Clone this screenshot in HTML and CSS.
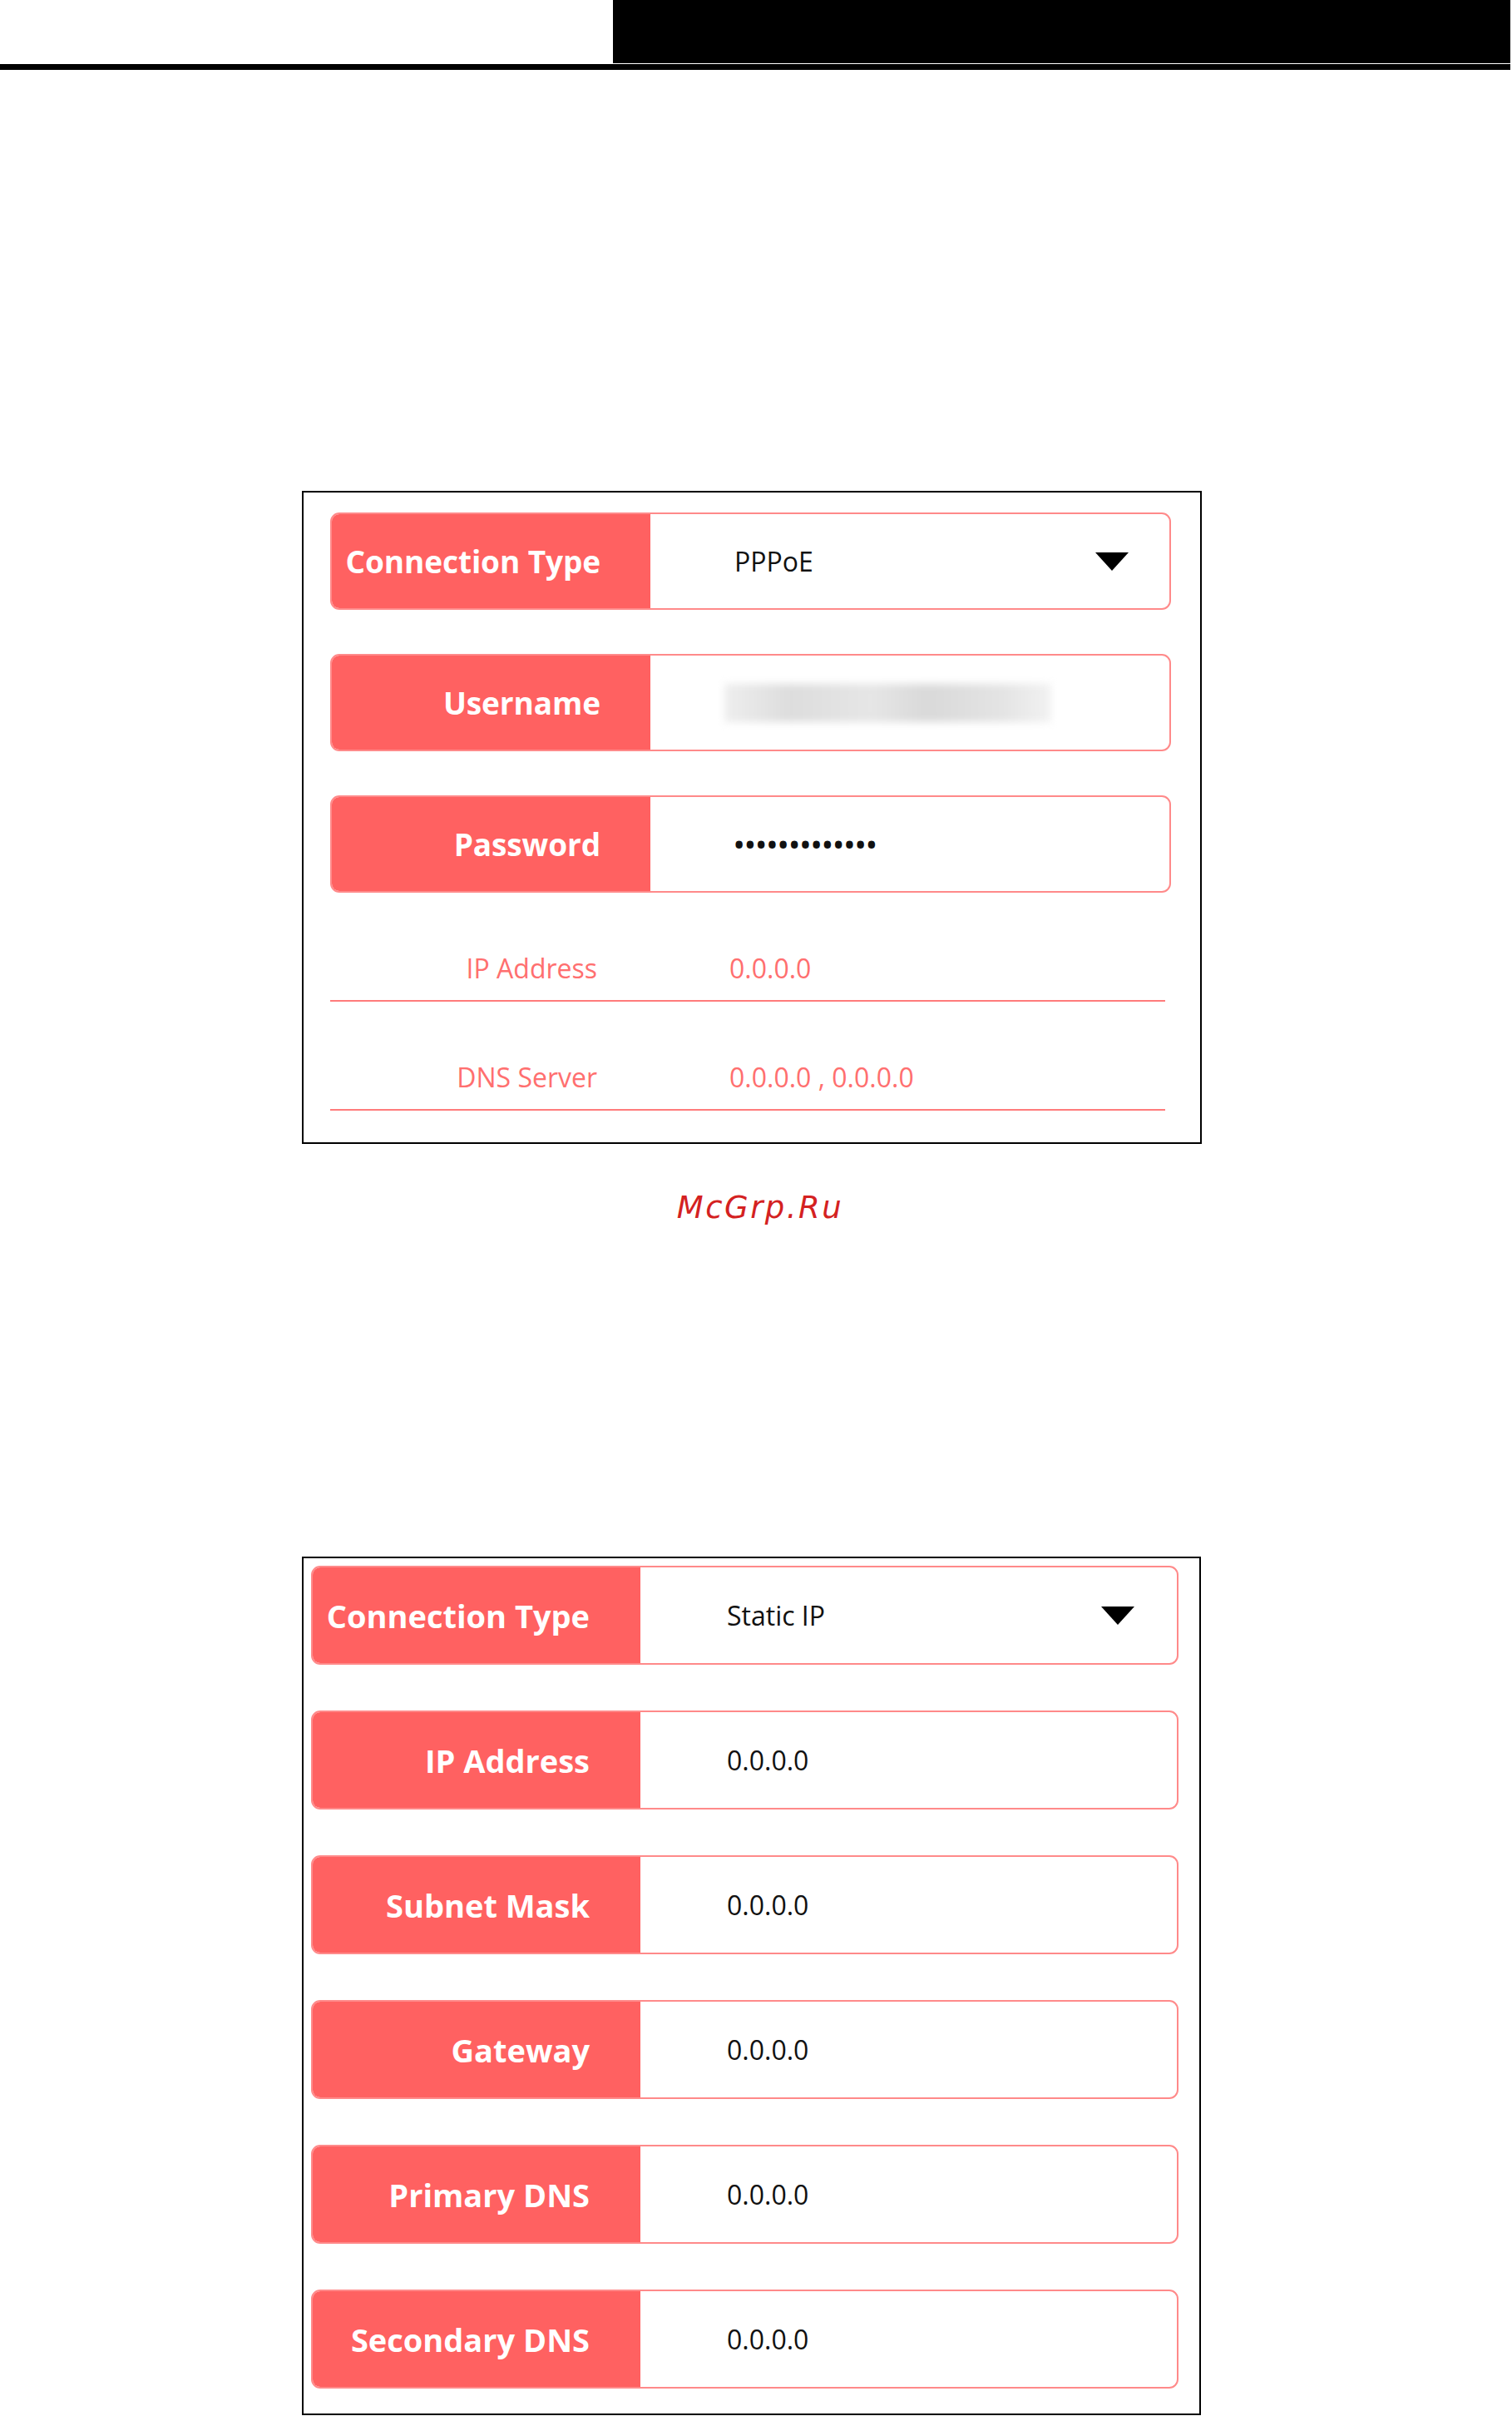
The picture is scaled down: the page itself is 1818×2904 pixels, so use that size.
FILE: index.html
```html
<!DOCTYPE html>
<html lang="en">
<head>
    <meta charset="UTF-8">
    <meta name="viewport" content="width=device-width, initial-scale=1.0">
    <title>Internet Settings</title>
    <link rel="stylesheet" href="styles.css">
</head>
<body>
    <div class="topbar">
        <div class="topbar-blank"></div>
        <div class="topbar-fill"></div>
    </div>
    <div class="topbar-rule"></div>

    <div class="panel panel-pppoe">
        <div class="field">
            <div class="field-label">Connection Type</div>
            <div class="field-value">
                <span>PPPoE</span>
                <svg class="caret" width="40" height="22" viewBox="0 0 40 22"><polygon points="0,0 40,0 20,22"/></svg>
            </div>
        </div>
        <div class="field">
            <div class="field-label">Username</div>
            <div class="field-value">
                <span class="blurred"></span>
            </div>
        </div>
        <div class="field">
            <div class="field-label">Password</div>
            <div class="field-value">
                <span class="dots">&bull;&bull;&bull;&bull;&bull;&bull;&bull;&bull;&bull;&bull;&bull;&bull;&bull;</span>
            </div>
        </div>
        <div class="info-row">
            <div class="info-label">IP Address</div>
            <div class="info-value">0.0.0.0</div>
        </div>
        <div class="info-row">
            <div class="info-label">DNS Server</div>
            <div class="info-value">0.0.0.0 , 0.0.0.0</div>
        </div>
    </div>

    <p class="watermark">McGrp.Ru</p>

    <div class="panel panel-static">
        <div class="field">
            <div class="field-label">Connection Type</div>
            <div class="field-value">
                <span>Static IP</span>
                <svg class="caret" width="40" height="22" viewBox="0 0 40 22"><polygon points="0,0 40,0 20,22"/></svg>
            </div>
        </div>
        <div class="field">
            <div class="field-label">IP Address</div>
            <div class="field-value"><span>0.0.0.0</span></div>
        </div>
        <div class="field">
            <div class="field-label">Subnet Mask</div>
            <div class="field-value"><span>0.0.0.0</span></div>
        </div>
        <div class="field">
            <div class="field-label">Gateway</div>
            <div class="field-value"><span>0.0.0.0</span></div>
        </div>
        <div class="field">
            <div class="field-label">Primary DNS</div>
            <div class="field-value"><span>0.0.0.0</span></div>
        </div>
        <div class="field">
            <div class="field-label">Secondary DNS</div>
            <div class="field-value"><span>0.0.0.0</span></div>
        </div>
    </div>
</body>
</html>
```

FILE: styles.css
```css
body {
    margin: 0;
    padding: 0;
    background: #fff;
    font-family: "Open Sans", "Noto Sans", sans-serif;
    width: 1818px;
}

.topbar {
    display: flex;
    height: 76px;
}

.topbar-blank {
    width: 737px;
}

.topbar-fill {
    flex: 1;
    background: #000;
    margin-right: 2px;
}

.topbar-rule {
    margin-top: 1px;
    height: 7px;
    background: #000;
    margin-right: 2px;
}

.panel {
    box-sizing: border-box;
    margin-left: 363px;
    border: 2px solid #000;
    display: flex;
    flex-direction: column;
}

.panel-pppoe {
    margin-top: 506px;
    width: 1082px;
    padding: 24px 35px 38px 32px;
    gap: 53px;
}

.panel-static {
    margin-top: 398px;
    width: 1081px;
    padding: 9px 25px 30px 9px;
    gap: 55px;
}

.field {
    display: flex;
    height: 117px;
    box-sizing: border-box;
    border: 2px solid #ff8a8a;
    border-radius: 11px;
    overflow: hidden;
}

.panel-static .field {
    height: 119px;
}

.field-label {
    width: 383px;
    box-sizing: border-box;
    background: #ff6161;
    color: #fff;
    font-weight: 700;
    font-size: 37px;
    letter-spacing: -0.1px;
    padding-right: 60px;
    display: flex;
    align-items: center;
    justify-content: flex-end;
    white-space: nowrap;
}

.panel-static .field-label {
    width: 394px;
    padding-right: 61px;
    font-size: 38px;
    letter-spacing: 0;
}

.field-value {
    flex: 1;
    display: flex;
    align-items: center;
    justify-content: space-between;
    padding-left: 101px;
    padding-right: 49px;
    font-size: 32px;
    color: #111;
}

.panel-static .field-value {
    padding-left: 104px;
    padding-right: 51px;
}

.caret {
    fill: #000;
}

.blurred {
    width: 393px;
    height: 46px;
    margin-left: -12px;
    background: linear-gradient(90deg, #eeeeee, #dddddd 20%, #e6e6e6 45%, #d9d9d9 62%, #e4e4e4 85%, #f2f2f2);
    filter: blur(5px);
}

.dots {
    font-size: 30px;
    letter-spacing: 2px;
    font-weight: 700;
}

.panel-pppoe .field + .info-row {
    margin-top: -53px;
}

.info-row {
    display: flex;
    align-items: flex-end;
    height: 131px;
    box-sizing: border-box;
    border-bottom: 2px solid #ff7b7b;
    padding-bottom: 17px;
    margin-right: 7px;
    font-size: 32px;
    color: #ff6f6f;
}

.info-row + .info-row {
    margin-top: -53px;
}

.info-label {
    width: 321px;
    text-align: right;
}

.info-value {
    margin-left: 159px;
}

.watermark {
    margin: 55px 0 0 0;
    text-align: center;
    font-family: "DejaVu Sans", sans-serif;
    font-style: italic;
    font-size: 37px;
    letter-spacing: 2.5px;
    color: #d42121;
    padding-left: 10px;
}
```
